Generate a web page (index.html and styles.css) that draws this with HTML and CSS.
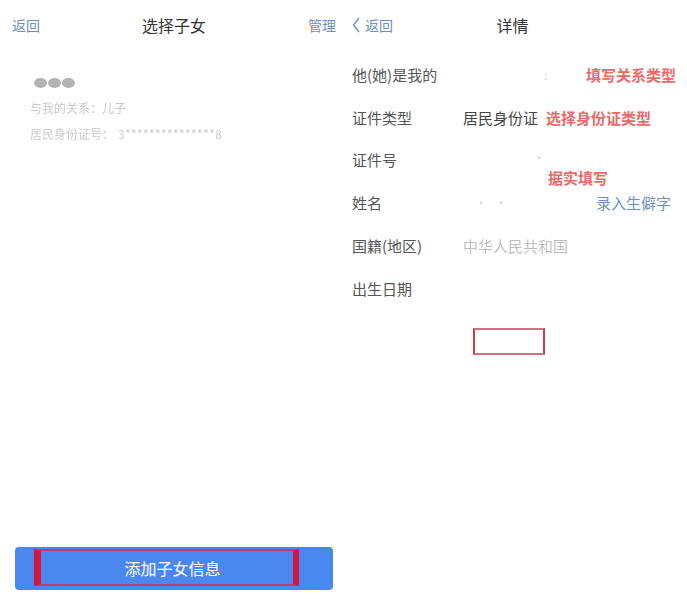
FILE: index.html
```html
<!DOCTYPE html>
<html lang="zh">
<head>
<meta charset="utf-8">
<link rel="stylesheet" href="styles.css">
</head>
<body>
<div class="screen">
  <section class="panel left">
    <header class="nav">
      <span class="nav-link">返回</span>
      <span class="nav-title">选择子女</span>
      <span class="nav-link right">管理</span>
    </header>
    <div class="child">
      <div class="name-blobs"><span></span><span></span><span></span></div>
      <div class="info">与我的关系：儿子</div>
      <div class="info">居民身份证号：<span class="id">3***************8</span></div>
    </div>
    <div class="spacer"></div>
    <div class="btn-wrap">
      <button class="add-btn"><span class="add-frame">添加子女信息</span></button>
    </div>
  </section>

  <section class="panel right-panel">
    <header class="nav nav2">
      <span class="nav-link back">
        <svg width="8" height="16" viewBox="0 0 8 16"><path d="M7 1 L1.5 8 L7 15" fill="none" stroke="#6b8fc0" stroke-width="1.4"/></svg>
        返回
      </span>
      <span class="nav-title">详情</span>
      <span></span>
    </header>
    <div class="form">
      <div class="row">
        <span class="label">他(她)是我的</span>
        <span class="faint dot1">:</span>
        <span class="note note-rel">填写关系类型</span>
      </div>
      <div class="row">
        <span class="label">证件类型</span>
        <span class="value">居民身份证</span>
        <span class="note note-type">选择身份证类型</span>
      </div>
      <div class="row">
        <span class="label">证件号</span>
        <span class="faint dot3">·</span>
        <span class="note note-real">据实填写</span>
      </div>
      <div class="row">
        <span class="label">姓名</span>
        <span class="faint dot4">·&nbsp;&nbsp;&nbsp;·</span>
        <span class="rare">录入生僻字</span>
      </div>
      <div class="row">
        <span class="label">国籍(地区)</span>
        <span class="value blur">中华人民共和国</span>
      </div>
      <div class="row">
        <span class="label">出生日期</span>
      </div>
      <div class="box"></div>
    </div>
  </section>
</div>
</body>
</html>
```

FILE: styles.css
```css
* { box-sizing: border-box; }
html, body { margin: 0; padding: 0; background: #fff; }
body {
  font-family: "Noto Sans CJK SC", "Noto Sans", "Liberation Sans", sans-serif;
  width: 687px;
  height: 599px;
  overflow: hidden;
}
.screen { display: flex; height: 599px; }
.panel { display: flex; flex-direction: column; height: 599px; }
.left { width: 345px; }
.right-panel { width: 342px; }

.nav {
  height: 50px;
  display: grid;
  grid-template-columns: 1fr auto 1fr;
  align-items: center;
  padding: 0 9px 0 12px;
}
.nav-link { font-size: 14px; color: #6b8fc0; line-height: 1; }
.nav-link.right { justify-self: end; }
.nav-title { font-size: 16px; color: #333; line-height: 1; }
.nav2 { padding: 0 14px 0 7px; }
.back { display: flex; align-items: center; gap: 5px; }
.back svg { display: block; }

.child { padding: 26px 0 0 30px; }
.name-blobs { display: flex; gap: 1px; padding-left: 4px; height: 10px; margin-top: 2px; margin-bottom: 7px; }
.name-blobs span {
  width: 13px; height: 10px; border-radius: 50%;
  background: #b3b3b3; filter: blur(0.7px);
}
.info {
  font-size: 12px; color: #c9c9c9; line-height: 26px;
  filter: blur(0.3px);
}
.info .id { margin-left: 4px; letter-spacing: 0.4px; }
.spacer { flex: 1; }

.btn-wrap { padding: 0 12px 9px 15px; }
.add-btn {
  width: 318px; height: 43px;
  background: #4a87ee;
  border: none; border-radius: 4px;
  padding: 2px 0 4px 19px;
  display: flex; align-items: stretch;
  font-family: inherit;
}
.add-frame {
  width: 265px;
  border-top: 2px solid #b6406f;
  border-bottom: 2px solid #b6406f;
  border-left: 7px solid #d4173a;
  border-right: 6px solid #d4173a;
  padding-left: 11px;
  color: #fff; font-size: 16px;
  display: flex; align-items: center; justify-content: center;
}

.form { padding: 3px 16px 0 7px; }
.row {
  position: relative;
  height: 42.8px;
  display: flex;
  align-items: center;
  font-size: 15px;
}
.label { width: 111px; color: #555; }
.value { color: #444; }
.value.blur { color: #bdbdbd; filter: blur(0.3px); }
.note { color: #e86a6a; font-weight: bold; }
.note-rel { margin-left: auto; margin-right: -5px; }
.note-type { margin-left: 8px; }
.note-real { position: absolute; left: 196px; top: 28px; }
.faint { color: #d8d8d8; font-size: 12px; }
.dot1 { margin-left: 81px; }
.dot3 { margin-left: 70px; margin-top: -4px; }
.dot4 { margin-left: 12px; }
.rare { margin-left: auto; color: #6b8fc0; }

.box {
  margin: 18px 0 0 121px;
  width: 72px; height: 27px;
  border: 2px solid #d1707f;
  border-left-color: #c93b4f;
  border-right-color: #c93b4f;
}
```
